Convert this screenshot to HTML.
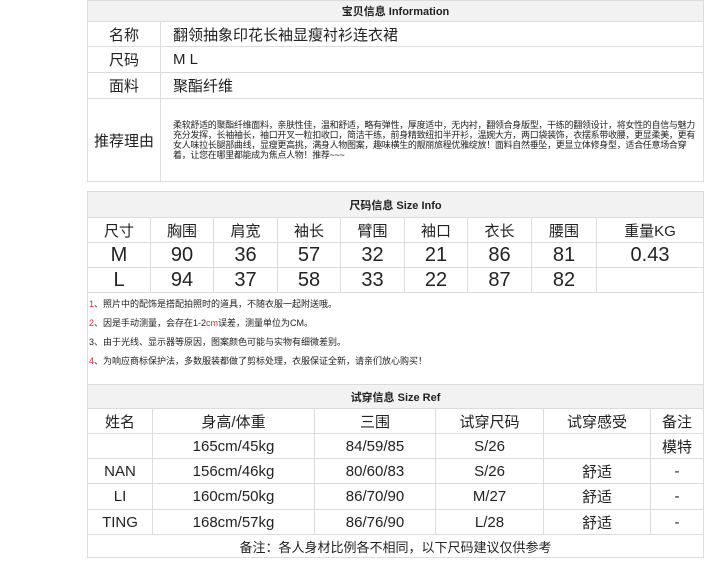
<!DOCTYPE html>
<html><head><meta charset="utf-8"><style>
*{margin:0;padding:0;box-sizing:border-box}
body{width:710px;height:564px;background:#fff;font-family:"Liberation Sans","Noto Sans CJK SC",sans-serif;color:#222;position:relative;overflow:hidden}
table{position:absolute;left:87px;width:617px;border-collapse:collapse;table-layout:fixed}
td{border:1px solid #dcdcdc;text-align:center;vertical-align:middle;white-space:nowrap;overflow:hidden}
.h td{background:#f2f2f2;font-weight:bold;font-size:11px;color:#222}
.b td{font-size:15px}
.n td{font-size:20px}
.b td.l{text-align:left;padding-left:12px}
.b td.p{font-size:9px;line-height:10px;text-align:left;white-space:normal;padding:0 2px 0 12px;letter-spacing:-0.3px}
.notes{font-size:9px;text-align:left;padding-left:1px;line-height:19px;vertical-align:top;padding-top:2px}
.r{color:#c33}
</style></head><body>
<table style="top:0">
<col style="width:73px"><col>
<tr class="h"><td colspan="2" style="height:21px">宝贝信息 Information</td></tr>
<tr class="b"><td style="height:25px">名称</td><td class="l">翻领抽象印花长袖显瘦衬衫连衣裙</td></tr>
<tr class="b"><td style="height:26px">尺码</td><td class="l">M L</td></tr>
<tr class="b"><td style="height:26px">面料</td><td class="l">聚酯纤维</td></tr>
<tr class="b"><td style="height:83px">推荐理由</td><td class="p">柔软舒适的聚酯纤维面料，亲肤性佳，温和舒适，略有弹性，厚度适中，无内衬，翻领合身版型，干练的翻领设计，将女性的自信与魅力充分发挥，长袖袖长，袖口开叉一粒扣收口，简洁干练，前身精致纽扣半开衫，温婉大方，两口袋装饰，衣摆系带收腰，更显柔美，更有女人味拉长腿部曲线，显瘦更高挑，满身人物图案，趣味横生的靓丽旅程优雅绽放！面料自然垂坠，更显立体修身型，适合任意场合穿着，让您在哪里都能成为焦点人物！推荐~~~</td></tr>
</table>

<table style="top:191px">
<col style="width:63px"><col style="width:63px"><col style="width:64px"><col style="width:63px"><col style="width:64px"><col style="width:63px"><col style="width:64px"><col style="width:65px"><col>
<tr class="h"><td colspan="9" style="height:26px">尺码信息 Size Info</td></tr>
<tr class="b"><td style="height:25px">尺寸</td><td>胸围</td><td>肩宽</td><td>袖长</td><td>臂围</td><td>袖口</td><td>衣长</td><td>腰围</td><td>重量KG</td></tr>
<tr class="n"><td style="height:25px">M</td><td>90</td><td>36</td><td>57</td><td>32</td><td>21</td><td>86</td><td>81</td><td>0.43</td></tr>
<tr class="n"><td style="height:25px">L</td><td>94</td><td>37</td><td>58</td><td>33</td><td>22</td><td>87</td><td>82</td><td></td></tr>
<tr><td colspan="9" class="notes" style="height:114px"><span class="r">1</span>、照片中的配饰是搭配拍照时的道具，不随衣服一起附送哦。<br><span class="r">2</span>、因是手动测量，会存在1-2<span class="r">cm</span>误差，测量单位为CM。<br>3、由于光线、显示器等原因，图案颜色可能与实物有细微差别。<br><span class="r">4</span>、为响应商标保护法，多数服装都做了剪标处理，衣服保证全新，请亲们放心购买！</td></tr>
</table>

<table style="top:384px">
<col style="width:65px"><col style="width:162px"><col style="width:121px"><col style="width:108px"><col style="width:107px"><col>
<tr class="h"><td colspan="6" style="height:24px">试穿信息 Size Ref</td></tr>
<tr class="b"><td style="height:25px">姓名</td><td>身高/体重</td><td>三围</td><td>试穿尺码</td><td>试穿感受</td><td>备注</td></tr>
<tr class="b"><td style="height:25px"></td><td>165cm/45kg</td><td>84/59/85</td><td>S/26</td><td></td><td>模特</td></tr>
<tr class="b"><td style="height:25px">NAN</td><td>156cm/46kg</td><td>80/60/83</td><td>S/26</td><td>舒适</td><td>-</td></tr>
<tr class="b"><td style="height:26px">LI</td><td>160cm/50kg</td><td>86/70/90</td><td>M/27</td><td>舒适</td><td>-</td></tr>
<tr class="b"><td style="height:25px">TING</td><td>168cm/57kg</td><td>86/76/90</td><td>L/28</td><td>舒适</td><td>-</td></tr>
<tr><td colspan="6" style="height:23px;font-size:13px">备注：各人身材比例各不相同，以下尺码建议仅供参考</td></tr>
</table>
</body></html>
